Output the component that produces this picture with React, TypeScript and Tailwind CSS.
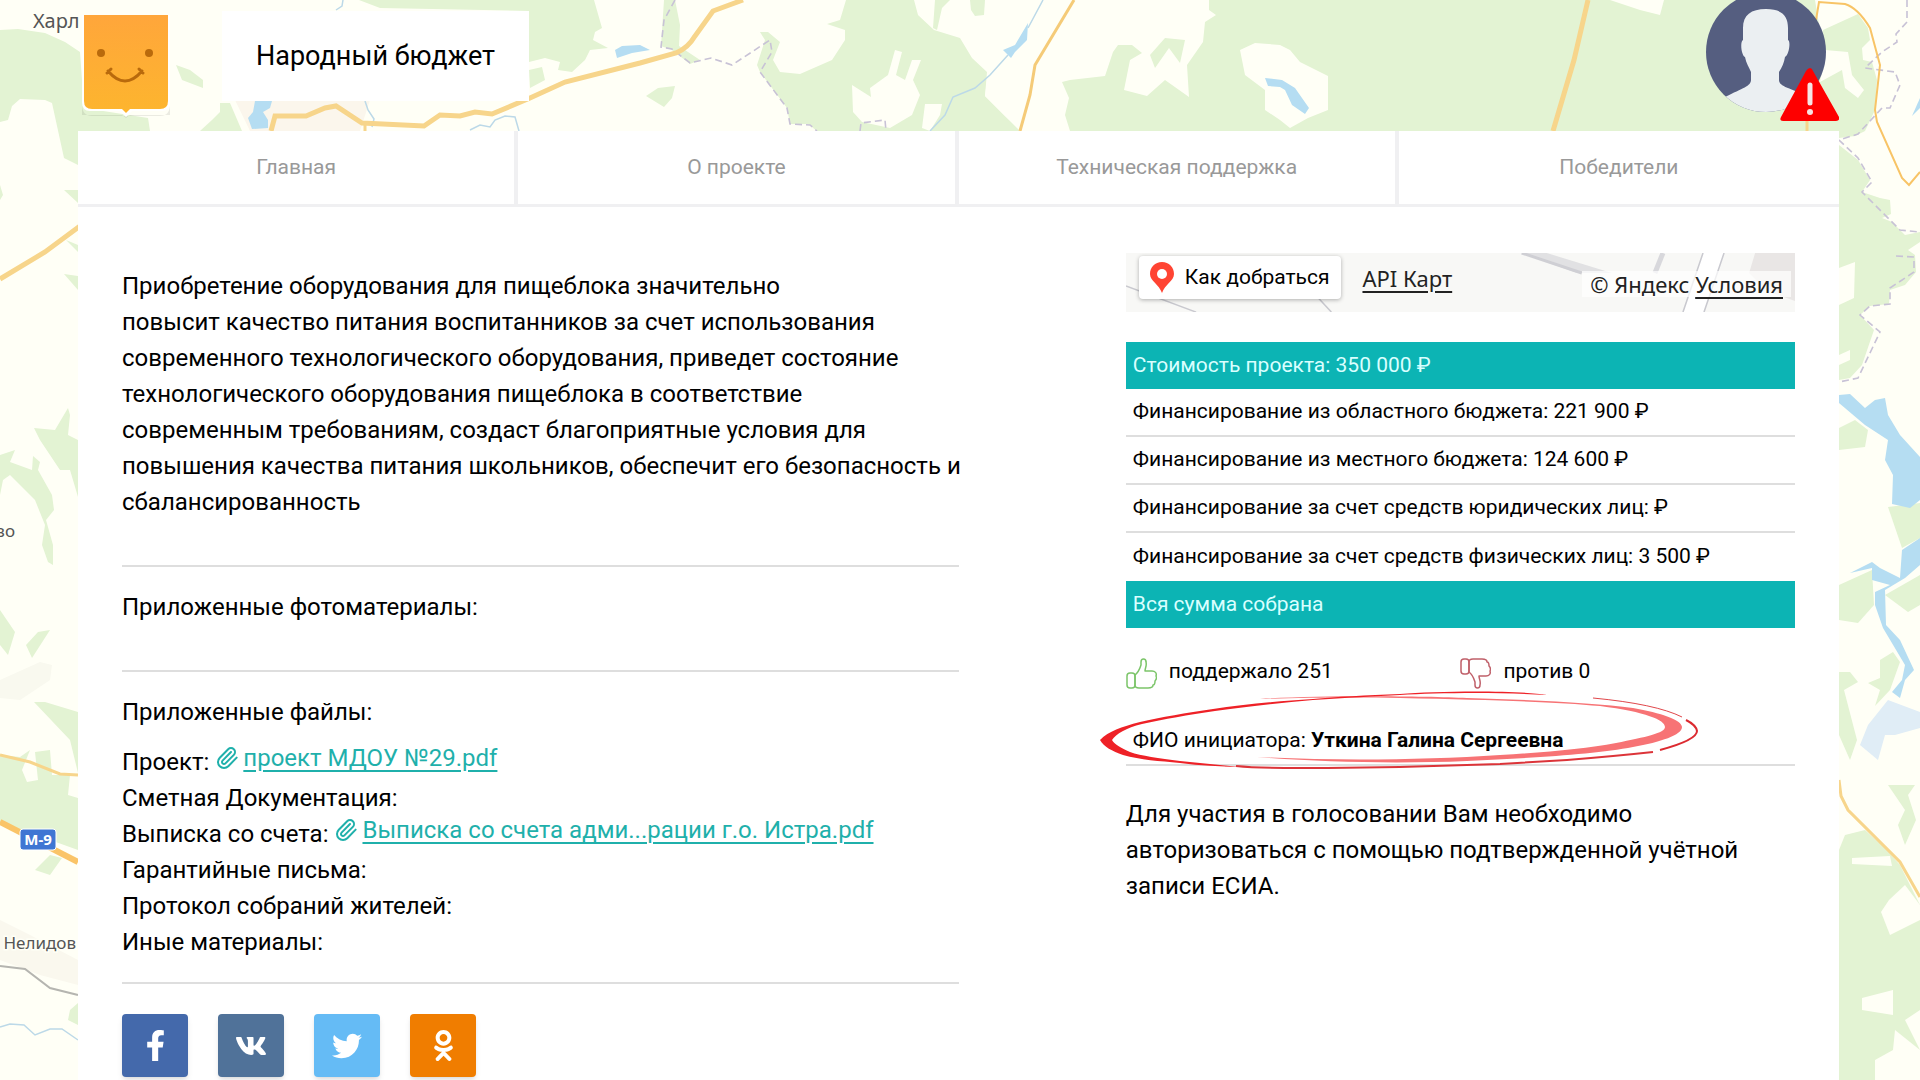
import React from "react";
import { FaFacebookF, FaOdnoklassniki, FaTwitter, FaVk } from "react-icons/fa";
import { Paperclip } from "lucide-react";

const navItems = ["Главная", "О проекте", "Техническая поддержка", "Победители"];

const funding = [
  "Финансирование из областного бюджета: 221 900 ₽",
  "Финансирование из местного бюджета: 124 600 ₽",
  "Финансирование за счет средств юридических лиц: ₽",
  "Финансирование за счет средств физических лиц: 3 500 ₽",
];

const files = [
  { label: "Проект:", file: "проект МДОУ №29.pdf" },
  { label: "Сметная Документация:" },
  { label: "Выписка со счета:", file: "Выписка со счета адми...рации г.о. Истра.pdf" },
  { label: "Гарантийные письма:" },
  { label: "Протокол собраний жителей:" },
  { label: "Иные материалы:" },
];

const socials = [
  { name: "Facebook", color: "bg-[#4469ab]", icon: <FaFacebookF size={31} /> },
  { name: "ВКонтакте", color: "bg-[#507299]", icon: <FaVk size={32} /> },
  { name: "Twitter", color: "bg-[#65bbf5]", icon: <FaTwitter size={30} /> },
  { name: "Одноклассники", color: "bg-[#f07d00]", icon: <FaOdnoklassniki size={31} /> },
];

const forests = [
  "0,30 18,29 45,33 65,42 80,52 84,108 148,118 150,131 78,131 78,165 64,158 52,103 45,100 20,99 12,106 8,120 0,122",
  "176,65 190,70 203,80 203,88 182,80",
  "359,0 594,0 602,28 595,32 593,40 608,48 590,50 585,60 572,72 558,70 560,62 545,58 529,62 529,11 380,8",
  "529,70 542,67 545,80 530,88",
  "220,103 230,103 242,131 200,131 212,120 220,112",
  "646,96 658,88 675,86 672,98 664,107",
  "664,0 675,0 680,25 679,46 700,60 690,64 672,50 661,46",
  "846,0 914,0 918,15 934,30 960,38 972,58 987,72 985,96 1005,116 1020,131 817,131 808,124 790,124 787,108 760,72 757,65 765,40 760,32 768,32 780,42 773,60 780,72 800,74 832,60 845,40 845,30 827,24 840,20",
  "935,0 950,0 942,8 937,30 933,28",
  "970,0 985,0 984,15 975,16 971,10",
  "1209,0 1209,10 1216,15 1205,22 1203,42 1187,65 1189,97 1165,80 1147,96 1124,90 1130,60 1142,53 1132,45 1118,45 1113,52 1105,76 1070,80 1062,82 1069,98 1065,115 1070,131 1840,131 1825,60 1815,0",
  "1150,55 1165,38 1185,40 1180,63 1169,48 1155,68",
  "1823,30 1858,14 1868,28 1870,40 1862,48 1863,60 1872,62 1877,80 1875,110 1865,131 1855,136 1839,138 1815,131 1815,60",
  "1839,145 1858,160 1870,180 1862,192 1880,198 1890,200 1891,214 1882,218 1892,222 1905,235 1920,232 1920,242 1908,250 1915,255 1916,272 1905,285 1890,290 1889,304 1870,306 1860,315 1874,330 1862,365 1850,378 1839,380",
  "1839,428 1855,420 1868,430 1865,447 1839,450",
  "1888,507 1920,503 1920,538 1902,548",
  "1839,585 1872,570 1874,605 1858,623 1839,620",
  "1885,595 1920,575 1920,605 1908,612",
  "1880,660 1893,652 1900,662 1890,690 1875,706 1880,690 1868,683 1880,678",
  "1839,672 1850,672 1858,682 1844,690 1857,740 1850,760 1839,735",
  "1888,785 1915,785 1908,795 1916,820 1905,845 1898,825 1905,810",
  "1839,850 1845,835 1865,830 1885,848 1900,865 1920,905 1920,1010 1905,1020 1920,1050 1895,1030 1893,1050 1875,1060 1875,1080 1839,1080",
  "64,190 78,190 78,203",
  "66,240 78,245 78,252",
  "64,274 78,276 78,290",
  "0,185 3,195 0,200",
  "34,428 55,430 68,408 70,415 68,435 78,440 78,497 70,470 60,470 50,455 40,440",
  "0,455 15,450 10,462 32,470 33,456 40,462 38,470 52,495 54,510 46,520 53,545 53,565 48,562 42,545 45,525 35,500 10,475 3,480 0,495",
  "0,610 15,632 8,655 0,645",
  "26,645 38,632 50,630 32,658",
  "34,702 45,702 78,712 78,773 70,740",
  "0,755 20,757 30,750 22,770 27,782 38,780 35,752 50,750 52,775 70,775 68,795 78,798 78,850 0,822",
  "35,870 50,855 62,858 50,875",
  "70,1010 78,1003 78,1025 68,1020",
];

const fields = [
  "852,85 871,97 870,88 888,75 895,50 902,52 896,75 905,80 912,60 921,60 913,80 920,95 912,115 890,128 862,122 853,112",
  "925,104 942,104 940,115 930,131 922,128",
  "988,72 985,96 1005,116 1022,131 1040,90 1030,60",
  "1240,50 1255,43 1280,45 1290,50 1300,62 1328,76 1328,110 1308,118 1290,128 1280,120 1265,110 1265,90 1245,75",
  "1610,0 1664,0 1660,15 1640,10",
  "1825,50 1848,52 1852,75 1864,90 1858,98 1845,88 1842,70 1820,82",
  "1839,268 1855,262 1854,298 1839,305",
  "1839,355 1850,350 1850,360 1839,365",
  "1889,900 1905,885 1920,905 1920,920 1890,935 1881,912",
  "1852,858 1890,856 1892,866 1852,864",
  "1862,998 1893,990 1893,1015 1862,1010",
];

const lakes = [
  "255,101 272,101 270,108 263,112 268,120 268,128 252,129 248,118 253,112",
  "615,50 622,46 640,45 650,50 632,53 617,58",
  "1028,23 1027,40 1015,52 1011,58 1003,50 1015,45",
  "1265,78 1282,80 1295,88 1309,108 1305,114 1292,105 1285,90 1280,87 1268,86",
  "1839,395 1850,394 1865,408 1875,400 1885,398 1888,415 1900,435 1920,457 1920,500 1910,508 1892,504 1893,475 1885,460 1888,440 1865,425 1839,403",
  "1850,573 1872,562 1880,568 1900,578 1902,550 1920,538 1920,565 1905,578 1885,590 1886,625 1900,640 1914,670 1905,680 1900,698 1892,692 1902,680 1905,665 1883,628 1875,605 1875,592 1890,585 1872,580 1872,568",
  "1912,116 1920,98 1920,108",
];

const MapBackground = () => {
  return (
    <svg
      className="absolute inset-0 h-full w-full"
      viewBox="0 0 1920 1080"
      preserveAspectRatio="xMidYMin slice"
      aria-hidden="true"
    >
      <rect width="1920" height="1080" fill="#fffff6" />
      <path d="M235 100H370L360 131H250Z" fill="#fbf6ec" />
      <path d="M0 680L40 662L52 665L50 680L20 700L0 698Z" fill="#f9f9ef" />
      <path d="M0 920L30 935L78 960V985L40 975L0 960Z" fill="#faf8ee" />
      {forests.map((p) => (
        <polygon key={p} points={p} fill="#e3f3d3" />
      ))}
      {fields.map((p) => (
        <polygon key={p} points={p} fill="#fffff6" />
      ))}
      <polygon
        points="1860,745 1868,725 1888,700 1920,712 1920,728 1895,735 1885,735 1878,760"
        fill="#e0edf6"
      />
      {lakes.map((p) => (
        <polygon key={p} points={p} fill="#b5ddf2" />
      ))}
      <g fill="none" stroke="#bcd9e8" strokeWidth="1.5">
        <path d="M1043 0L1028 28M1008 55L990 75L975 88L953 97L945 115L930 131" />
        <path d="M365 101L368 110L374 119L372 127" />
        <path d="M470 130L480 125L490 127L495 120L505 116L515 117L519 131" />
        <path d="M336 10L342 6L343 0" />
        <path d="M0 1027L10 1024L24 1025L35 1035L50 1029L62 1029L78 1040" />
      </g>
      <g fill="none" stroke="#c8c2d6" strokeWidth="1.6" strokeDasharray="7 4">
        <path d="M675 0L664 20L661 47L672 49L690 63L711 58L732 65L770 40L772 52L760 72L787 108L790 124L810 125L817 131" />
        <path d="M860 131L861 123L885 120L886 131" />
        <path d="M1907 0V22L1896 34L1897 42L1882 52L1865 68L1895 72L1900 85L1890 108H1882L1858 134L1839 140L1858 158L1872 182L1862 192L1900 230L1920 232" />
        <path d="M1896 256L1914 257V272L1890 288V304L1870 306L1860 315L1880 332L1858 378L1839 382" />
      </g>
      <path d="M0 966L25 969L50 988L78 995" fill="none" stroke="#b5b5b0" strokeWidth="2" />
      <g fill="none" stroke="#f7d58b">
        <path
          d="M271 131L275 116L306 116L325 108L336 106L362 123L424 126L440 115L460 116L475 112L492 114L530 98L565 82L640 63L676 53Q688 48 695 36L713 11L743 0"
          strokeWidth="5"
        />
        <path d="M365 122V131" strokeWidth="3" />
        <path d="M1074 0L1035 65L1030 95L1020 131" strokeWidth="3" stroke="#f5cb78" />
        <path d="M1588 0L1574 60L1553 131" strokeWidth="5" />
        <path
          d="M1816 20L1819 2L1845 4Q1858 8 1870 28L1880 65L1875 110L1877 122L1902 178L1909 185L1920 172"
          strokeWidth="2"
          stroke="#f8c466"
        />
        <path d="M1807 110V131" strokeWidth="3" />
        <path d="M0 279L45 252L80 226" strokeWidth="5" />
        <path d="M0 755L30 762L60 774L78 775" strokeWidth="3" />
        <path d="M0 822L78 862" strokeWidth="6" stroke="#fac468" />
        <path d="M1839 780L1841 796L1848 810L1900 862L1920 897" strokeWidth="3" />
      </g>
      <rect x="20" y="829" width="36" height="21" rx="3" fill="#3f76d3" stroke="#fff" strokeWidth="1" />
      <g fontFamily="Noto Sans, sans-serif" fill="#555" stroke="#fffff6" strokeWidth="3" paintOrder="stroke">
        <text x="33" y="28" fontSize="20">Харл</text>
        <text x="15" y="537" fontSize="17" textAnchor="end">во</text>
        <text x="76" y="949" fontSize="17" textAnchor="end">Нелидов</text>
      </g>
      <text x="38" y="845" fontFamily="Noto Sans, sans-serif" fontSize="15" fontWeight="700" fill="#fff" textAnchor="middle">
        М-9
      </text>
    </svg>
  );
};

const Logo = () => {
  return (
    <svg width="92" height="108" viewBox="0 0 92 108" aria-hidden="true">
      <defs>
        <linearGradient id="logoFill" x1="0" y1="0" x2="0" y2="1">
          <stop offset="0" stopColor="#ffa63b" />
          <stop offset="1" stopColor="#fdb52e" />
        </linearGradient>
      </defs>
      <path d="M2 92Q2 104 12 104H80Q90 104 90 92V103H50L46 106L42 103H2Z" fill="#000" opacity="0.08" />
      <path d="M2 3V90Q2 99 10 99H40L46 105L52 99H82Q90 99 90 90V3Z" fill="#fff" />
      <path d="M4 3H88V89Q88 97 80 97H50L46 101L42 97H12Q4 97 4 89Z" fill="url(#logoFill)" />
      <circle cx="21" cy="41" r="4" fill="#b96a0c" />
      <circle cx="69" cy="41" r="4" fill="#b96a0c" />
      <path
        d="M28 59Q45 79 62 59M27 61L31 57M59 57L63 61"
        fill="none"
        stroke="#b96a0c"
        strokeWidth="3"
        strokeLinecap="round"
      />
    </svg>
  );
};

const Avatar = () => {
  return (
    <svg width="134" height="131" viewBox="0 0 134 131" aria-hidden="true">
      <defs>
        <clipPath id="avatarClip">
          <circle cx="61" cy="52" r="60" />
        </clipPath>
      </defs>
      <circle cx="61" cy="52" r="60" fill="#555e80" />
      <path
        clipPath="url(#avatarClip)"
        d="M61 9C46 9 38 15 38 28V40C35 41 36 55 40 57C41 63 44 67 46 72V80C46 86 38 88 20 97V131H104V97C86 88 74 87 74 80V72C77 67 79 63 80 57C84 55 86 41 83 40V28C83 15 76 9 61 9Z"
        fill="#ebeff2"
      />
      <path d="M105 68Q107 68 108 71L134 117Q135 121 131 121H78Q74 121 76 117L101 71Q103 68 105 68Z" fill="#fe0000" />
      <path d="M105 85V103" stroke="#f6e4e4" strokeWidth="5" strokeLinecap="round" />
      <circle cx="105" cy="112" r="3" fill="#f6e4e4" />
    </svg>
  );
};

const Thumb = ({ className }: { className: string }) => {
  return (
    <svg
      className={className}
      width="31"
      height="31"
      viewBox="0 0 31 31"
      fill="none"
      stroke="currentColor"
      strokeWidth="1.5"
      strokeLinejoin="round"
      aria-hidden="true"
    >
      <rect x="1" y="15" width="8" height="15" rx="3" />
      <path d="M9 17C13 14 14 10 15 7V4C15 0 20 0 20 4C21 8 19 10 19 13H26C29 13 31 15 30 18C31 20 30 22 29 23C29 25 29 27 27 27C27 29 25 30 22 30H13C11 30 9 29 9 27Z" />
    </svg>
  );
};

// Hand-drawn marker loop round the initiator's name
const MarkerLoop = () => {
  return (
    <svg
      className="pointer-events-none absolute -left-[30px] -top-[3px] max-w-none"
      width="606"
      height="86"
      viewBox="0 0 606 86"
      fill="none"
      aria-hidden="true"
    >
      <path
        d="M164 13C220 9 330 10 371 12C440 14 500 17 537 22C565 27 586 34 586 41C586 49 565 56 537 61C500 68 440 72 371 75C300 78 220 76 161 71C240 75 330 74 404 69C450 66 490 63 520 57C550 51 569 47 569 41C569 34 550 26 504 20C460 16 400 14 304 12C250 11 200 12 164 13Z"
        fill="#f77375"
      />
      <path
        d="M451 9C420 4 340 5 304 8C270 9 240 11 217 13C180 15 145 19 117 23C90 27 65 31 44 36C25 41 13 45 4 54C8 61 16 65 27 69C45 74 63 75 84 77C104 80 124 80 144 81C124 79 104 77 84 75C63 72 45 70 34 66C25 62 18 58 16 54C20 48 30 42 46 38C68 33 92 29 119 25C147 21 182 17 217 14C250 12 280 10 304 9C340 7 400 6 451 9Z"
        fill="#ee2127"
      />
      <path d="M140 80C170 83 210 82 231 82L304 81L404 78L471 74Q520 70 557 66" stroke="#dc3439" strokeWidth="2" />
      <path d="M564 64Q601 54 601 45Q600 39 590 34" stroke="#dc2a30" strokeWidth="2" />
      <path d="M586 31Q560 18 497 12" stroke="#e0474b" strokeWidth="1" />
    </svg>
  );
};

const ProjectMap = () => {
  return (
    <div className="relative flex h-[59px] items-start justify-between overflow-hidden bg-[#f8f8f6] text-[22px]">
      <svg
        className="absolute inset-0 h-full w-full"
        viewBox="0 0 668 59"
        preserveAspectRatio="xMaxYMin slice"
        aria-hidden="true"
      >
        <path d="M395 0H420L485 20H450Z" fill="#e1e1e3" />
        <path d="M395 0L455 20" stroke="#cfcfd4" strokeWidth="3" />
        <path d="M536 0L528 20" stroke="#d8d8dc" strokeWidth="5" />
        <path d="M576 0H597L577 59H556Z" fill="#fff" />
        <path d="M576 0L556 59M597 0L577 59M0 33L70 59M192 45L205 59" stroke="#c9c9cf" strokeWidth="1.5" />
        <path d="M628 0H668V48L640 38L622 20Z" fill="#e9e6e5" />
      </svg>
      <div className="relative flex items-start gap-[21px] pl-[13px] pt-[3px]">
        <button className="flex h-[43px] items-center gap-[11px] rounded bg-white pl-[11px] pr-3 shadow-[0_1px_4px_rgba(0,0,0,0.3)]">
          <svg width="24" height="31" viewBox="0 0 24 31" aria-hidden="true">
            <path d="M12 0C5 0 0 5 0 12C0 19 9 22 12 31C15 22 24 19 24 12C24 5 19 0 12 0Z" fill="#ff4433" />
            <circle cx="12" cy="12" r="5" fill="#fff" />
          </svg>
          <span className="text-[21px]">Как добраться</span>
        </button>
        <a href="#" className="font-['Noto_Sans',sans-serif] leading-[45px] text-[#222] underline underline-offset-4">
          API Карт
        </a>
      </div>
      <div className="relative mr-1 mt-[18px] bg-white/70 px-2 font-['Noto_Sans',sans-serif] leading-[26px] text-[#222]">
        © Яндекс{" "}
        <a href="#" className="underline underline-offset-4">
          Условия
        </a>
      </div>
    </div>
  );
};

export default function App() {
  return (
    <div className="relative flex min-h-screen flex-col overflow-hidden pl-[78px] pr-[81px] font-[Roboto,sans-serif] text-black">
      <MapBackground />

      <header className="relative flex h-[131px] items-start justify-between">
        <div className="flex items-start">
          <a href="#" aria-label="На главную" className="mt-3 ml-0.5 block">
            <Logo />
          </a>
          <div className="ml-[50px] mt-[11px] flex h-[90px] items-center bg-white px-[34px]">
            <h1 className="text-[27px] leading-9">Народный бюджет</h1>
          </div>
        </div>
        <button aria-label="Профиль" className="block">
          <Avatar />
        </button>
      </header>

      <div className="relative flex-1 bg-white">
        <nav className="grid grid-cols-4 border-b-[3px] border-[#f0f0f2] text-[21px]">
          {navItems.map((item) => (
            <a
              key={item}
              href="#"
              className="flex h-[73px] items-center justify-center border-r-4 border-[#f0f0f2] text-[#999] last:border-r-0"
            >
              {item}
            </a>
          ))}
        </nav>

        <main className="flex justify-between px-11 pt-[46px]">
          <div className="w-1/2 pt-[15px] text-2xl leading-9">
            <p className="whitespace-nowrap border-b-2 border-[#dedede] pb-[45px]">
              Приобретение оборудования для пищеблока значительно
              <br />
              повысит качество питания воспитанников за счет использования
              <br />
              современного технологического оборудования, приведет состояние
              <br />
              технологического оборудования пищеблока в соответствие
              <br />
              современным требованиям, создаст благоприятные условия для
              <br />
              повышения качества питания школьников, обеспечит его безопасность и
              <br />
              сбалансированность
            </p>
            <h2 className="border-b-2 border-[#dedede] pb-[45px] pt-[22px]">Приложенные фотоматериалы:</h2>
            <section className="border-b-2 border-[#dedede] pb-[22px] pt-[22px]">
              <h2 className="mb-[14px]">Приложенные файлы:</h2>
              <ul>
                {files.map((row) => (
                  <li key={row.label} className="flex h-9 gap-1.5">
                    <span>{row.label}</span>
                    {row.file && (
                      <a href="#" className="flex items-center gap-1 pb-2 text-[#1fb0ab]">
                        <Paperclip size={24} strokeWidth={2} />
                        <span className="leading-7 underline underline-offset-4">{row.file}</span>
                      </a>
                    )}
                  </li>
                ))}
              </ul>
            </section>
            <div className="mt-[30px] flex gap-[30px]">
              {socials.map((s) => (
                <a
                  key={s.name}
                  href="#"
                  aria-label={s.name}
                  className={`flex h-[63px] w-[66px] items-center justify-center rounded text-white shadow-md ${s.color}`}
                >
                  {s.icon}
                </a>
              ))}
            </div>
          </div>

          <div className="w-2/5">
            <ProjectMap />

            <div className="mt-[30px] text-[21px]">
              <div className="flex h-[47px] items-center bg-[#0cb4b4] px-[7px] text-[#d9ffff]">
                Стоимость проекта: 350 000 ₽
              </div>
              <ul>
                {funding.map((row) => (
                  <li
                    key={row}
                    className="flex h-12 items-center border-b-2 border-[#dedede] px-[7px] last:border-b-0"
                  >
                    {row}
                  </li>
                ))}
              </ul>
              <div className="flex h-[47px] items-center bg-[#0cb4b4] px-[7px] text-[#d9ffff]">
                Вся сумма собрана
              </div>
            </div>

            <div className="mt-[25px] grid h-9 grid-cols-2 text-[21px] leading-9">
              <button className="flex gap-3 text-left">
                <Thumb className="self-end text-[#7cc56a]" />
                поддержало 251
              </button>
              <button className="flex gap-3 text-left">
                <Thumb className="-scale-y-100 self-end text-[#c0606a]" />
                против 0
              </button>
            </div>

            <div className="relative border-b-2 border-[#dedede] px-[7px] pb-[6px] pt-[33px] text-[21px] leading-9">
              ФИО инициатора: <b>Уткина Галина Сергеевна</b>
              <MarkerLoop />
            </div>

            <p className="mt-[30px] text-2xl leading-9">
              Для участия в голосовании Вам необходимо авторизоваться с помощью подтвержденной учётной записи ЕСИА.
            </p>
          </div>
        </main>
      </div>
    </div>
  );
}
